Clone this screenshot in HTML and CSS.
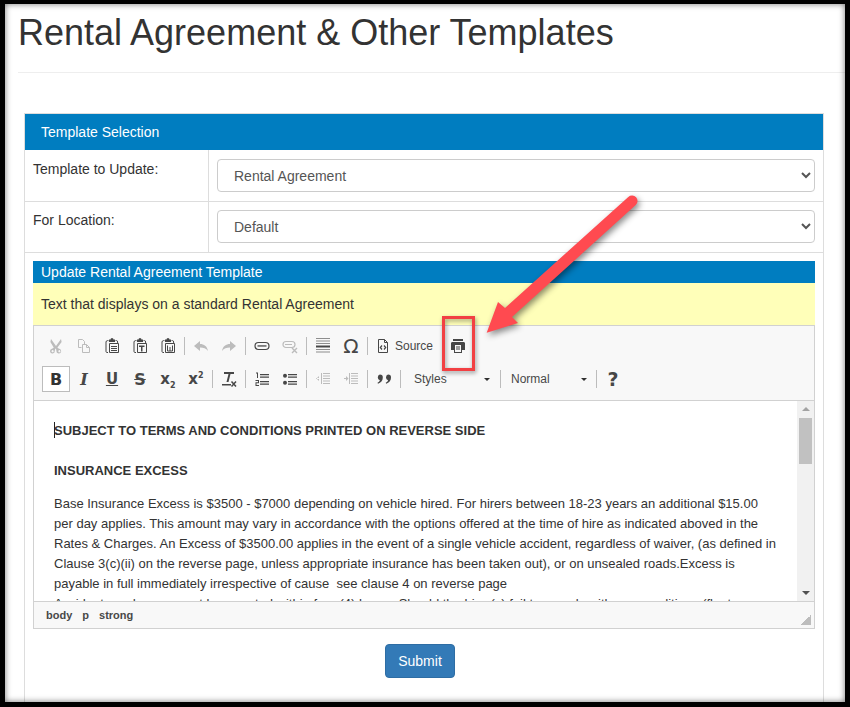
FILE: index.html
```html
<!DOCTYPE html>
<html lang="en">
<head>
<meta charset="utf-8">
<title>Rental Agreement &amp; Other Templates</title>
<link rel="stylesheet" href="styles.css">
</head>
<body>
<svg class="sprites" aria-hidden="true">
  <symbol id="i-cut" viewBox="0 0 16 16"><path d="M3 1l5 7 5-7 .6 3L9.500 9.600c.4.8 1 1 1.800 1.200a2.400 2.400 0 1 1-2.900 2.200c0-.8-.2-1.400-.4-2l-.4-.5-.4.500c-.2.600-.4 1.200-.4 2a2.400 2.400 0 1 1-2.900-2.200c.8-.2 1.400-.4 1.800-1.200L2.400 4zM4.600 12.100a1.100 1.100 0 1 0 .01 0zM11.400 12.100a1.100 1.100 0 1 0 .01 0z"/></symbol>
  <symbol id="i-copy" viewBox="0 0 16 16"><path fill="none" stroke="currentColor" d="M2.500 1.500h4l2 2v3M2.500 1.500v8h3M6.500 6.500h4l3 3v5h-7zM10.500 6.500v3h3"/></symbol>
  <symbol id="i-paste" viewBox="0 0 16 16"><path fill="none" stroke="currentColor" d="M4.500 2.600H3.400C2.600 2.600 2 3.200 2 4v9.500c0 .6.500 1 1 1h1M11.500 2.600h1.100c.8 0 1 .6 1 1.400v1.500M5.500 5.500h9v9h-9z"/><path d="M5 1.500h1.500a1.500 1.500 0 0 1 3 0H11V4H5z"/><path d="M7 8h6v1H7zM7 10h6v1H7zM7 12h6v1H7z"/></symbol>
  <symbol id="i-pastet" viewBox="0 0 16 16"><path fill="none" stroke="currentColor" d="M4.500 2.600H3.400C2.600 2.600 2 3.200 2 4v9.500c0 .6.500 1 1 1h1M11.500 2.600h1.100c.8 0 1 .6 1 1.400v1.500M5.500 5.500h9v9h-9z"/><path d="M5 1.500h1.500a1.500 1.500 0 0 1 3 0H11V4H5z"/><path d="M7 7.500h5.500V9h-2v4.500H9V9H7z"/></symbol>
  <symbol id="i-pastew" viewBox="0 0 16 16"><path fill="none" stroke="currentColor" d="M4.500 2.600H3.400C2.600 2.600 2 3.200 2 4v9.500c0 .6.500 1 1 1h1M11.500 2.600h1.100c.8 0 1 .6 1 1.400v1.500M5.500 5.500h9v9h-9z"/><path d="M5 1.500h1.500a1.500 1.500 0 0 1 3 0H11V4H5z"/><path fill="none" stroke="currentColor" d="M7.500 7.500v5.500h5V7.500M10 9v4"/></symbol>
  <symbol id="i-undo" viewBox="0 0 16 16"><path d="M7 3v3c4 0 7 2 8 7-2-3-4.500-3.500-8-3.500V13L1 8z"/></symbol>
  <symbol id="i-redo" viewBox="0 0 16 16"><path d="M9 3v3c-4 0-7 2-8 7 2-3 4.500-3.500 8-3.500V13l6-5z"/></symbol>
  <symbol id="i-link" viewBox="0 0 16 16"><rect x="1" y="4.500" width="14" height="7" rx="3.500" fill="none" stroke="currentColor" stroke-width="1.200"/><path d="M3.500 7.300h9v1.300h-9z"/></symbol>
  <symbol id="i-unlink" viewBox="0 0 16 16"><rect x="1" y="3.500" width="12" height="6" rx="3" fill="none" stroke="currentColor" stroke-width="1.200"/><path d="M3 6h7v1H3z"/><path fill="none" stroke="currentColor" stroke-width="1.400" d="M10 10l5 5M15 10l-5 5"/></symbol>
  <symbol id="i-hr" viewBox="0 0 16 16"><path fill-opacity=".6" d="M1 0h14v1H1zM1 2.500h14v1H1zM1 5h14v1H1zM1 11h14v1H1zM1 13.500h14v1H1z"/><path d="M1 7.500h14v2H1z"/></symbol>
  <symbol id="i-src" viewBox="0 0 16 16"><path fill="none" stroke="currentColor" d="M3.500 1.500h6l3 3v10h-9zM9.500 1.500v3h3"/><path fill="none" stroke="currentColor" stroke-width="1.200" d="M7 7.500L5.300 9.500 7 11.500M9 7.500l1.700 2-1.700 2"/></symbol>
  <symbol id="i-print" viewBox="0 0 16 16"><path d="M3 1h10v2H3zM2 4h12a2 2 0 0 1 1 1v7h-3v3H4v-3H1V5a2 2 0 0 1 1-1z"/><path fill="#f8f8f8" d="M5 7h6v7H5z"/><path d="M6 8.500h4v1H6zM6 10.500h4v1H6z"/></symbol>
  <symbol id="i-clear" viewBox="0 0 16 16"><path d="M3 1h10v2H9.500l-2 8H5.500l2-8H3zM1 13h9v1.500H1z"/><path fill="none" stroke="currentColor" stroke-width="1.500" d="M10.500 10.500l4.500 5M15 10.500l-4.500 5"/></symbol>
  <symbol id="i-ol" viewBox="0 0 16 16"><path d="M6 3h9v1.200H6zM6 5.500h9v1.200H6zM6 10h9v1.200H6zM6 12.500h9v1.200H6zM2 1.500h2v5.500H3V2.500H2zM1.500 9H5v3.200H2.500V14H5v1H1.500v-3.800H4V10H1.500z"/></symbol>
  <symbol id="i-ul" viewBox="0 0 16 16"><path d="M6 3h9v1.200H6zM6 5.500h9v1.200H6zM6 10h9v1.200H6zM6 12.500h9v1.200H6z"/><circle cx="3" cy="4.800" r="2"/><circle cx="3" cy="11.800" r="2"/></symbol>
  <symbol id="i-outdent" viewBox="0 0 16 16"><path d="M8 2h7v1H8zM8 4.500h7v1H8zM8 7h7v1H8zM8 9.500h7v1H8zM8 12h7v1H8zM6 2h1v11H6zM1 7h3V5L1.500 7.500 4 10V8H1z"/></symbol>
  <symbol id="i-indent" viewBox="0 0 16 16"><path d="M8 2h7v1H8zM8 4.500h7v1H8zM8 7h7v1H8zM8 9.500h7v1H8zM8 12h7v1H8zM6 2h1v11H6zM1 7h2V5l2.500 2.500L3 10V8H1z"/></symbol>
  <symbol id="i-quote" viewBox="0 0 16 16"><path d="M3.800 3.500a3 3 0 0 1 3 3.200c0 2.800-2 5-4.800 6l-.5-1c1.200-.6 2-1.300 2.400-2.500A3 3 0 0 1 3.800 3.500zM12 3.500a3 3 0 0 1 3 3.200c0 2.800-2 5-4.800 6l-.5-1c1.200-.6 2-1.300 2.400-2.500A3 3 0 0 1 12 3.500z"/></symbol>
</svg>

<div class="page">
  <h1 class="title">Rental Agreement &amp; Other Templates</h1>
  <hr class="rule">

  <section class="panel">
    <h2 class="panel-head">Template Selection</h2>
    <div class="form-row">
      <label class="form-label" for="tpl">Template to Update:</label>
      <div class="form-field"><select id="tpl" class="select"><option>Rental Agreement</option></select></div>
    </div>
    <div class="form-row">
      <label class="form-label" for="loc">For Location:</label>
      <div class="form-field"><select id="loc" class="select"><option>Default</option></select></div>
    </div>

    <div class="update">
      <div class="update-head">Update Rental Agreement Template</div>
      <div class="update-note">Text that displays on a standard Rental Agreement</div>

      <div class="editor">
        <div class="toolbar">
          <div class="tool-row">
            <span class="btn off"><svg class="ico"><use href="#i-cut"/></svg></span>
            <span class="btn off"><svg class="ico"><use href="#i-copy"/></svg></span>
            <span class="btn"><svg class="ico"><use href="#i-paste"/></svg></span>
            <span class="btn"><svg class="ico"><use href="#i-pastet"/></svg></span>
            <span class="btn"><svg class="ico"><use href="#i-pastew"/></svg></span>
            <span class="sep"></span>
            <span class="btn off"><svg class="ico"><use href="#i-undo"/></svg></span>
            <span class="btn off"><svg class="ico"><use href="#i-redo"/></svg></span>
            <span class="sep"></span>
            <span class="btn"><svg class="ico"><use href="#i-link"/></svg></span>
            <span class="btn off"><svg class="ico"><use href="#i-unlink"/></svg></span>
            <span class="sep"></span>
            <span class="btn"><svg class="ico"><use href="#i-hr"/></svg></span>
            <span class="btn glyph-omega">Ω</span>
            <span class="sep"></span>
            <span class="btn-source"><svg class="ico"><use href="#i-src"/></svg>Source</span>
            <span class="btn"><svg class="ico"><use href="#i-print"/></svg></span>
          </div>
          <div class="tool-row">
            <span class="btn glyph-b active">B</span>
            <span class="btn glyph-i">I</span>
            <span class="btn glyph-u">U</span>
            <span class="btn glyph-s">S</span>
            <span class="btn glyph-x"><span>x<sub class="script">2</sub></span></span>
            <span class="btn glyph-x"><span>x<sup class="script">2</sup></span></span>
            <span class="sep"></span>
            <span class="btn"><svg class="ico"><use href="#i-clear"/></svg></span>
            <span class="sep"></span>
            <span class="btn"><svg class="ico"><use href="#i-ol"/></svg></span>
            <span class="btn"><svg class="ico"><use href="#i-ul"/></svg></span>
            <span class="sep"></span>
            <span class="btn off"><svg class="ico"><use href="#i-outdent"/></svg></span>
            <span class="btn off"><svg class="ico"><use href="#i-indent"/></svg></span>
            <span class="sep"></span>
            <span class="btn"><svg class="ico"><use href="#i-quote"/></svg></span>
            <span class="sep"></span>
            <span class="combo combo-styles">Styles<i class="caret"></i></span>
            <span class="sep"></span>
            <span class="combo combo-format">Normal<i class="caret"></i></span>
            <span class="sep"></span>
            <span class="btn glyph-help">?</span>
          </div>
        </div>

        <div class="editor-body">
          <div class="content">
            <p class="line-head"><strong><span class="caret-text"></span>SUBJECT TO TERMS AND CONDITIONS PRINTED ON REVERSE SIDE</strong></p>
            <p class="line-head"><strong>INSURANCE EXCESS</strong></p>
            <p>Base Insurance Excess is $3500 - $7000 depending on vehicle hired. For hirers between 18-23 years an additional $15.00 per day applies. This amount may vary in accordance with the options offered at the time of hire as indicated aboved in the Rates &amp; Charges. An Excess of $3500.00 applies in the event of a single vehicle accident, regardless of waiver, (as defined in Clause 3(c)(ii) on the reverse page, unless appropriate insurance has been taken out), or on unsealed roads.Excess is payable in full immediately irrespective of cause&nbsp; see clause 4 on reverse page<br>Accidents and users must be reported within four (4) hours. Should the hirer(s) fail to comply with any conditions (fleet</p>
          </div>
          <div class="scrollbar">
            <i class="arrow-up"></i>
            <div class="track"><div class="thumb"></div></div>
            <i class="arrow-down"></i>
          </div>
        </div>

        <div class="editor-foot">
          <span class="crumb">body</span><span class="crumb">p</span><span class="crumb">strong</span>
          <i class="grip"></i>
        </div>
      </div>
    </div>

    <div class="actions"><button class="submit" type="button">Submit</button></div>
  </section>

  <div class="callout"></div>
  <svg class="pointer" viewBox="0 0 170 150" aria-hidden="true">
    <path fill="#ff4a50" d="M148.300 6.900A5.500 5.500 0 0 1 155.700 15.100L32 127l6 6-31.300 9.700L18 112l7 6z"/>
  </svg>
</div>
</body>
</html>
```

FILE: styles.css
```css
* { box-sizing: border-box; }
html, body { margin: 0; height: 100%; }
body {
  background: #000;
  padding: 4px 5px 5px;
  font-family: "Liberation Sans", Arial, sans-serif;
  font-size: 14px;
  line-height: 20px;
  color: #333;
  overflow: hidden;
}
.sprites { position: absolute; width: 0; height: 0; }

.page {
  position: relative;
  height: 698px;
  background: #fff;
  overflow: hidden;
}
.page::after {
  content: "";
  position: absolute;
  inset: 0;
  box-shadow: inset 0 0 6px rgba(0, 0, 0, .55);
  pointer-events: none;
}

.title {
  margin: 0;
  padding: 9px 0 0 13px;
  font-size: 36px;
  font-weight: 400;
  line-height: 40px;
  color: #333;
}
.rule {
  margin: 19px 0 0 13px;
  border: 0;
  border-top: 1px solid #eee;
}

.panel {
  margin: 40px 21px 0 19px;
  height: 600px;
  border: 1px solid #ddd;
}
.panel-head {
  margin: 0;
  height: 36px;
  padding-left: 16px;
  background: #007dc0;
  color: #fff;
  font-size: 14px;
  font-weight: 400;
  line-height: 36px;
}
.form-row {
  display: grid;
  grid-template-columns: 183px 1fr;
  height: 52px;
  border-bottom: 1px solid #ddd;
  --row-pad: 9px;
}
.form-row + .form-row {
  height: 51px;
  --row-pad: 8px;
}
.form-label {
  padding: var(--row-pad) 8px;
}
.form-field {
  border-left: 1px solid #ddd;
  padding: var(--row-pad) 8px 0;
}
.select {
  display: block;
  width: 100%;
  height: 33px;
  padding: 6px 12px;
  border: 1px solid #ccc;
  border-radius: 4px;
  background: #fff;
  color: #555;
  font-family: inherit;
  font-size: 14px;
}

.update {
  margin: 8px 8px 0;
}
.update-head {
  height: 22px;
  padding-left: 8px;
  background: #007dc0;
  color: #fff;
  line-height: 22px;
}
.update-note {
  height: 42px;
  padding: 11px 8px 0;
  background: #ffffb9;
}

.editor {
  height: 304px;
  border: 1px solid #d1d1d1;
  display: flex;
  flex-direction: column;
}
.toolbar {
  height: 75px;
  padding: 6px 0 0 8px;
  background: #f8f8f8;
  border-bottom: 1px solid #d1d1d1;
  flex: none;
}
.tool-row {
  display: flex;
  align-items: center;
  height: 28px;
  margin-bottom: 5px;
}
.btn {
  display: flex;
  align-items: center;
  justify-content: center;
  width: 28px;
  height: 26px;
  flex: none;
  color: #474747;
}
.btn.off { color: #bcbcbc; }
.ico {
  display: block;
  width: 16px;
  height: 16px;
  fill: currentColor;
}
.sep {
  width: 1px;
  height: 18px;
  margin: 0 2px;
  background: #bcbcbc;
  flex: none;
}
.btn-source {
  display: flex;
  align-items: center;
  gap: 4px;
  width: 74px;
  padding-left: 5px;
  font-size: 12px;
  color: #474747;
  flex: none;
}
.glyph-omega { font: 400 20px "DejaVu Sans", sans-serif; }
.glyph-b { font: 700 16px "DejaVu Sans", sans-serif; }
.glyph-i { font: italic 700 16px "DejaVu Serif", serif; }
.glyph-u { font: 700 15px "DejaVu Sans", sans-serif; text-decoration: underline; }
.glyph-s { font: 700 16px "DejaVu Sans", sans-serif; text-decoration: line-through; }
.glyph-x { font: 700 15px "DejaVu Sans", sans-serif; }
.glyph-help { font: 700 19px "DejaVu Sans", sans-serif; }
.script { font-size: 8px; line-height: 0; }
.active {
  background: #fff;
  border: 1px solid #bcbcbc;
  color: #333;
}
.combo {
  display: flex;
  align-items: center;
  justify-content: space-between;
  height: 26px;
  font-size: 12px;
  color: #484848;
  flex: none;
}
.combo-styles { width: 95px; padding: 0 8px 0 11px; }
.combo-format { width: 91px; padding: 0 7px 0 8px; }
.caret {
  width: 0;
  height: 0;
  border: 3px solid transparent;
  border-top-color: #2f2f2f;
  border-bottom-width: 0;
}

.editor-body {
  display: flex;
  flex: 1;
  min-height: 0;
  background: #fff;
}
.content {
  flex: 1;
  min-width: 0;
  padding: 0 20px;
  overflow: hidden;
  font-size: 13px;
  color: #333;
}
.content p { margin: 0 0 20px; }
.content .line-head:first-child { margin-top: 20px; }
.content .line-head + .line-head { margin-bottom: 13px; }
.content strong { font-weight: 700; }
.caret-text {
  display: inline-block;
  width: 1px;
  height: 16px;
  margin-right: -1px;
  vertical-align: -3px;
  background: #222;
}
.scrollbar {
  width: 17px;
  flex: none;
  display: flex;
  flex-direction: column;
  align-items: center;
  background: #f1f1f1;
}
.arrow-up, .arrow-down {
  width: 0;
  height: 0;
  border: 4px solid transparent;
  flex: none;
}
.arrow-up { margin: 6px 0 4px; border-bottom: 4px solid #a3a3a3; border-top-width: 0; }
.arrow-down { margin: 4px 0 6px; border-top: 4px solid #505050; border-bottom-width: 0; }
.track { flex: 1; width: 100%; padding: 3px 2px 0; }
.thumb { height: 46px; background: #c1c1c1; }

.editor-foot {
  position: relative;
  height: 27px;
  flex: none;
  display: flex;
  align-items: center;
  gap: 10px;
  padding-left: 12px;
  background: #f8f8f8;
  border-top: 1px solid #d1d1d1;
  font-size: 11px;
  font-weight: 700;
  color: #484848;
}
.grip {
  position: absolute;
  right: 3px;
  bottom: 3px;
  width: 10px;
  height: 10px;
  background: linear-gradient(135deg, transparent 50%, #bdbdbd 50%);
}

.actions {
  display: flex;
  justify-content: center;
  padding: 15px 8px 0 0;
}
.submit {
  width: 70px;
  height: 34px;
  border: 1px solid #2e6da4;
  border-radius: 4px;
  background: #337ab7;
  color: #fff;
  font-family: inherit;
  font-size: 14px;
}

.callout {
  position: absolute;
  left: 437px;
  top: 312px;
  width: 33px;
  height: 55px;
  border: 3px solid #f24043;
  filter: drop-shadow(1px 2px 2px rgba(0, 0, 0, .4));
}
.pointer {
  position: absolute;
  left: 475px;
  top: 186px;
  width: 170px;
  height: 150px;
  overflow: visible;
  filter: drop-shadow(2px 3px 3px rgba(0, 0, 0, .45));
}
```
